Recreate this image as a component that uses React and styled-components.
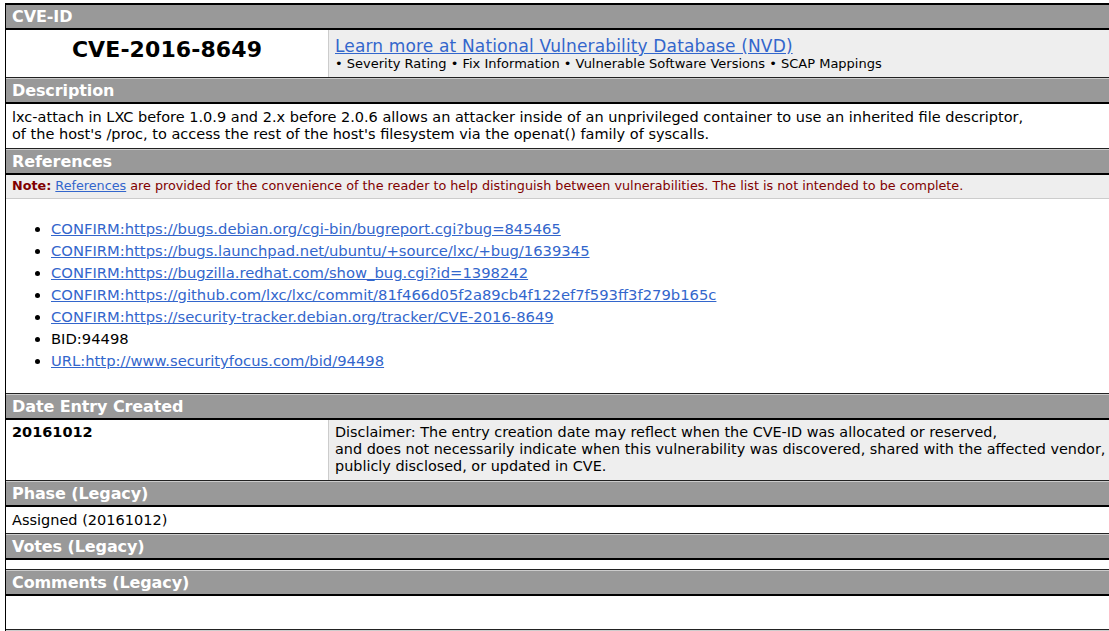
import React from 'react'
import styled, { createGlobalStyle } from 'styled-components'

const GlobalStyle = createGlobalStyle`
  body {
    margin: 0;
    background: #fff;
    font-family: "DejaVu Sans", Verdana, sans-serif;
    color: #000;
  }
`

const Page = styled.div`
  padding: 3px 0 0 5px;
  width: 1120px;
  overflow: hidden;
`

const Table = styled.div`
  border-left: 1px solid #000;
  border-top: 2px solid #000;
`

const Header = styled.div`
  background: #999;
  color: #fff;
  font-weight: bold;
  font-size: 16px;
  height: 23px;
  line-height: 23px;
  padding-left: 6px;
  border-top: ${p => (p.$first ? '0' : '1px solid #ccc')};
  border-bottom: 2px solid #000;
  letter-spacing: -0.1px;
`

const Row = styled.div`
  display: flex;
  border-bottom: 1px solid #222;
`

const Cell = styled.div`
  width: ${p => p.$width || 'auto'};
  flex: ${p => (p.$width ? 'none' : '1')};
  background: ${p => (p.$shaded ? '#eee' : '#fff')};
  border-left: ${p => (p.$shaded ? '1px solid #ccc' : '0')};
  padding: ${p => p.$pad || '2px 6px'};
  min-height: ${p => p.$min || '0'};
  box-sizing: border-box;
`

const BigId = styled.div`
  font-size: 22px;
  font-weight: bold;
  text-align: center;
  padding-top: 5px;
  letter-spacing: 0.1px;
`

const Link = styled.a`
  color: #3366cc;
  text-decoration: underline;
  cursor: pointer;
`

const NvdLink = styled(Link)`
  font-size: 17px;
  display: block;
  line-height: 20px;
  margin-top: 4px;
  letter-spacing: 0.15px;
`

const Small = styled.div`
  font-size: 13px;
  line-height: 16px;
`

const Text = styled.div`
  font-size: ${p => p.$size || '14.5px'};
  line-height: 17px;
  padding: ${p => p.$pad || '0'};
`

const DateValue = styled(Text)`
  font-weight: bold;
`

const Note = styled.div`
  background: #eee;
  color: #800000;
  font-size: 12.75px;
  line-height: 16px;
  padding: 3px 6px 4px;
  border-bottom: 1px solid #ccc;
  b { color: #800000; }
`

const List = styled.ul`
  margin: 0;
  padding: 19px 0 21px 45px;
  font-size: 14.75px;
  line-height: 22px;
`

const Block = styled.div`
  border-bottom: 1px solid #222;
`

const Empty = styled.div`
  height: ${p => p.$h};
  border-bottom: 1px solid #222;
`

const refs = [
  { text: 'CONFIRM:https://bugs.debian.org/cgi-bin/bugreport.cgi?bug=845465', link: true },
  { text: 'CONFIRM:https://bugs.launchpad.net/ubuntu/+source/lxc/+bug/1639345', link: true },
  { text: 'CONFIRM:https://bugzilla.redhat.com/show_bug.cgi?id=1398242', link: true },
  { text: 'CONFIRM:https://github.com/lxc/lxc/commit/81f466d05f2a89cb4f122ef7f593ff3f279b165c', link: true },
  { text: 'CONFIRM:https://security-tracker.debian.org/tracker/CVE-2016-8649', link: true },
  { text: 'BID:94498', link: false },
  { text: 'URL:http://www.securityfocus.com/bid/94498', link: true },
]

export default function App() {
  return (
    <Page>
      <GlobalStyle />
      <Table>
        <Header $first>CVE-ID</Header>
        <Row>
          <Cell $width="322px" $min="47px">
            <BigId>CVE-2016-8649</BigId>
          </Cell>
          <Cell $shaded>
            <NvdLink>Learn more at National Vulnerability Database (NVD)</NvdLink>
            <Small>• Severity Rating • Fix Information • Vulnerable Software Versions • SCAP Mappings</Small>
          </Cell>
        </Row>

        <Header>Description</Header>
        <Block>
          <Text $pad="5px 6px 5px">
            lxc-attach in LXC before 1.0.9 and 2.x before 2.0.6 allows an attacker inside of an unprivileged container to use an inherited file descriptor,
            <br />
            of the host's /proc, to access the rest of the host's filesystem via the openat() family of syscalls.
          </Text>
        </Block>

        <Header>References</Header>
        <Block>
          <Note>
            <b>Note:</b> <Link>References</Link> are provided for the convenience of the reader to help distinguish between vulnerabilities. The list is not intended to be complete.
          </Note>
          <List>
            {refs.map(r => (
              <li key={r.text}>{r.link ? <Link>{r.text}</Link> : r.text}</li>
            ))}
          </List>
        </Block>

        <Header>Date Entry Created</Header>
        <Row>
          <Cell $width="322px" $pad="4px 6px 5px">
            <DateValue>20161012</DateValue>
          </Cell>
          <Cell $shaded $pad="4px 6px 5px">
            <Text $size="14.4px">
              Disclaimer: The entry creation date may reflect when the CVE-ID was allocated or reserved,
              <br />
              and does not necessarily indicate when this vulnerability was discovered, shared with the affected vendor,
              <br />
              publicly disclosed, or updated in CVE.
            </Text>
          </Cell>
        </Row>

        <Header>Phase (Legacy)</Header>
        <Block>
          <Text $pad="5px 6px 4px">Assigned (20161012)</Text>
        </Block>

        <Header>Votes (Legacy)</Header>
        <Empty $h="9px" />

        <Header>Comments (Legacy)</Header>
        <Empty $h="33px" />

        <Header>Proposed (Legacy)</Header>
      </Table>
    </Page>
  )
}
